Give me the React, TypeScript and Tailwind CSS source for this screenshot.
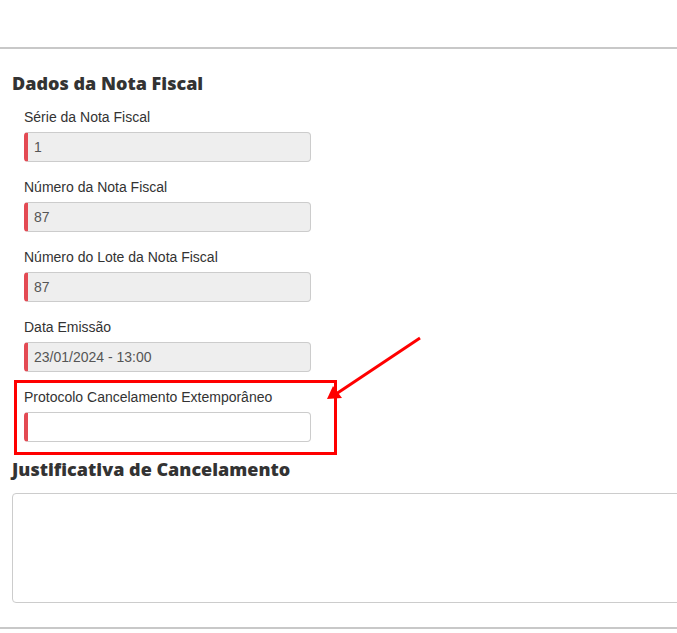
const fields = [
  { label: "Série da Nota Fiscal", value: "1", readOnly: true },
  { label: "Número da Nota Fiscal", value: "87", readOnly: true },
  { label: "Número do Lote da Nota Fiscal", value: "87", readOnly: true },
  { label: "Data Emissão", value: "23/01/2024 - 13:00", readOnly: true },
  { label: "Protocolo Cancelamento Extemporâneo", value: "", readOnly: false },
];

function Field({ label, value, readOnly }: { label: string; value: string; readOnly: boolean }) {
  return (
    <div className="mb-[15px]">
      <label className="block text-sm leading-5 text-[#333]">{label}</label>
      <div
        className={`mt-[5px] flex h-[30px] w-[287px] items-center rounded border border-[#ccc] border-l-4 border-l-[#e34a53] pl-[6px] text-sm text-[#555] ${
          readOnly ? "bg-[#eeeeee]" : "bg-white"
        }`}
      >
        {value}
      </div>
    </div>
  );
}

export default function App() {
  return (
    <div className="relative h-[633px] w-[677px] overflow-hidden bg-white font-['Liberation_Sans',Arial,sans-serif]">
      <div className="h-[49px] border-b-2 border-[#c8c8c8]" />
      <div className="pl-3">
        <h2 className="mt-[22px] font-['Open_Sans',sans-serif] text-lg font-extrabold leading-6 text-[#333]">
          Dados da Nota Fiscal
        </h2>
        <div className="mt-3 pl-3">
          {fields.map((f) => (
            <Field key={f.label} {...f} />
          ))}
        </div>
        <h2 className="mt-[2px] font-['Open_Sans',sans-serif] text-lg font-extrabold leading-6 text-[#333]">
          Justificativa de Cancelamento
        </h2>
        <div className="mt-3 h-[110px] w-[680px] rounded border border-[#ccc] bg-white" />
      </div>
      <div className="mt-[24px] border-b-2 border-[#c8c8c8]" />

      {/* annotation */}
      <div className="absolute left-[14px] top-[380px] h-[75px] w-[323px] border-[3px] border-[#ff0000]" />
      <svg className="absolute left-0 top-0" width="677" height="633">
        <line x1="420" y1="338" x2="336" y2="394" stroke="#ff0000" strokeWidth="3" />
        <polygon points="327,399 333,386 342,398" fill="#ff0000" />
      </svg>
    </div>
  );
}
